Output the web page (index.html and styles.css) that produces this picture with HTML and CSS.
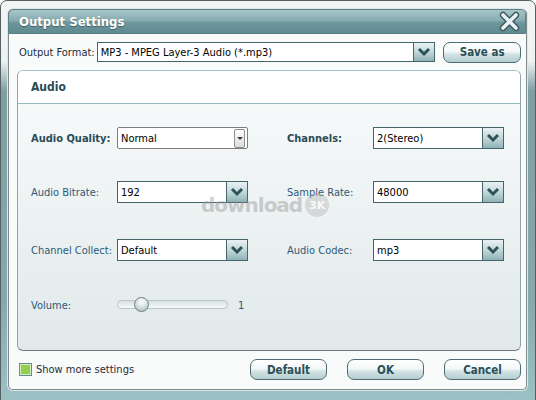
FILE: index.html
```html
<!DOCTYPE html>
<html lang="en">
<head>
    <meta charset="UTF-8">
    <title>Output Settings</title>
    <link rel="stylesheet" href="styles.css">
</head>
<body>

    <div class="window">
        <div class="dialog">
            <div class="titlebar">
                <span class="title">Output Settings</span>
                <svg class="close" width="21" height="21" viewBox="0 0 21 21">
                    <path d="M4 4 L17 17 M17 4 L4 17" stroke="#3b5a5f" stroke-width="6.4" stroke-linecap="round" fill="none"/>
                    <path d="M4 4 L17 17 M17 4 L4 17" stroke="#e9f1f2" stroke-width="3.6" stroke-linecap="round" fill="none"/>
                </svg>
            </div>

            <div class="format-row">
                <span class="format-label">Output Format:</span>
                <div class="combo combo-format">
                    <span class="combo-text">MP3 - MPEG Layer-3 Audio (*.mp3)</span>
                    <span class="combo-arrow"><svg width="14" height="10" viewBox="0 0 14 10"><path d="M2 2 L7 7 L12 2" stroke="#2b5359" stroke-width="3" fill="none"/></svg></span>
                </div>
                <button class="btn btn-save">Save as</button>
            </div>

            <div class="panel">
                <div class="panel-head">Audio</div>
                <div class="panel-body">
                    <div class="row row-1">
                        <span class="label label-bold">Audio Quality:</span>
                        <div class="combo combo-plain">
                            <span class="combo-text">Normal</span>
                            <span class="mini-btn"></span>
                        </div>
                        <span></span>
                        <span class="label label-bold">Channels:</span>
                        <div class="combo">
                            <span class="combo-text">2(Stereo)</span>
                            <span class="combo-arrow"><svg width="14" height="10" viewBox="0 0 14 10"><path d="M2 2 L7 7 L12 2" stroke="#2b5359" stroke-width="3" fill="none"/></svg></span>
                        </div>
                    </div>

                    <div class="row row-2">
                        <span class="label">Audio Bitrate:</span>
                        <div class="combo">
                            <span class="combo-text">192</span>
                            <span class="combo-arrow"><svg width="14" height="10" viewBox="0 0 14 10"><path d="M2 2 L7 7 L12 2" stroke="#2b5359" stroke-width="3" fill="none"/></svg></span>
                        </div>
                        <span></span>
                        <span class="label">Sample Rate:</span>
                        <div class="combo">
                            <span class="combo-text">48000</span>
                            <span class="combo-arrow"><svg width="14" height="10" viewBox="0 0 14 10"><path d="M2 2 L7 7 L12 2" stroke="#2b5359" stroke-width="3" fill="none"/></svg></span>
                        </div>
                    </div>

                    <div class="row row-3">
                        <span class="label">Channel Collect:</span>
                        <div class="combo">
                            <span class="combo-text">Default</span>
                            <span class="combo-arrow"><svg width="14" height="10" viewBox="0 0 14 10"><path d="M2 2 L7 7 L12 2" stroke="#2b5359" stroke-width="3" fill="none"/></svg></span>
                        </div>
                        <span></span>
                        <span class="label">Audio Codec:</span>
                        <div class="combo">
                            <span class="combo-text">mp3</span>
                            <span class="combo-arrow"><svg width="14" height="10" viewBox="0 0 14 10"><path d="M2 2 L7 7 L12 2" stroke="#2b5359" stroke-width="3" fill="none"/></svg></span>
                        </div>
                    </div>

                    <div class="row row-4">
                        <span class="label">Volume:</span>
                        <div class="slider">
                            <div class="slider-track"></div>
                            <div class="slider-thumb"></div>
                        </div>
                        <span class="slider-value">1</span>
                    </div>
                </div>
            </div>

            <div class="footer">
                <span class="check"></span>
                <span class="check-label">Show more settings</span>
                <div class="footer-btns">
                    <button class="btn">Default</button>
                    <button class="btn">OK</button>
                    <button class="btn">Cancel</button>
                </div>
            </div>
        </div>

        <!-- watermark from the screenshot source -->
        <div class="watermark">download<span class="wm-badge">3K</span></div>
    </div>

</body>
</html>
```

FILE: styles.css
```css
body {
    margin: 0;
    padding: 0;
    background-color: #ffffff;
    font-family: "DejaVu Sans Condensed", "DejaVu Sans", sans-serif;
    font-size: 11px;
}

.window {
    position: relative;
    width: 536px;
    height: 408px;
    box-sizing: border-box;
    border: 1px solid #565f61;
    border-radius: 7px 7px 0 0;
    padding: 8px 8px 0 7px;
    background: linear-gradient(to bottom, #f3f5f5 0px, #eef2f2 60px, #7f9ea2 90px, #86a9ad 300px, #9cc2c6 400px);
}

.dialog {
    display: flex;
    flex-direction: column;
    height: 381px;
    box-sizing: border-box;
    border: 1px solid #7d8b8d;
    border-top: none;
    border-radius: 5px;
    background: #f9fbfb;
    padding: 0 5px 0 8px;
    box-shadow: 0 0 0 1px #dfe8e9;
}

.titlebar {
    display: flex;
    align-items: center;
    justify-content: space-between;
    height: 23px;
    margin: 0 -5px 0 -9px;
    padding: 0 5px 0 10px;
    border-radius: 5px 5px 0 0;
    border: 1px solid #5b7f84;
    background: linear-gradient(to bottom, #a9c6c9 0%, #86abb0 45%, #6d979d 55%, #5f8a90 100%);
}

.title {
    color: #ffffff;
    font-weight: bold;
    font-size: 13px;
    text-shadow: 0 1px 1px rgba(0, 0, 0, 0.35);
}

.close {
    display: block;
}

.format-row {
    display: flex;
    align-items: center;
    margin-top: 8px;
    height: 20px;
}

.format-label {
    width: 78px;
    padding-left: 2px;
    color: #1d2a3a;
}

.combo {
    display: flex;
    align-items: center;
    justify-content: space-between;
    width: 131px;
    height: 22px;
    box-sizing: border-box;
    border: 1px solid #44666b;
    background: #ffffff;
}

.combo-text {
    padding-left: 3px;
    color: #000000;
    white-space: nowrap;
}

.combo-arrow {
    display: flex;
    align-items: center;
    justify-content: center;
    width: 20px;
    height: 100%;
    border-left: 1px solid #44666b;
    background: linear-gradient(to bottom, #e9f1f2 0%, #c3d8da 50%, #8fb2b6 100%);
}

.combo-format {
    width: 340px;
    height: 20px;
}

.combo-plain {
    border: 1px solid #7d7d7d;
    border-radius: 2px;
    padding-right: 2px;
}

.mini-btn {
    position: relative;
    width: 9px;
    height: 17px;
    border: 1px solid #8d8d8d;
    border-radius: 2px;
    background: linear-gradient(to bottom, #ffffff, #dcdcdc);
}

.mini-btn::after {
    content: "";
    position: absolute;
    left: 2px;
    top: 7px;
    border-left: 3px solid transparent;
    border-right: 3px solid transparent;
    border-top: 3px solid #3c3c3c;
}

.btn {
    width: 77px;
    height: 21px;
    padding: 0;
    font-family: inherit;
    font-size: 11.5px;
    font-weight: bold;
    color: #2b4f58;
    border: 1px solid #4e6d72;
    border-radius: 7px;
    background: linear-gradient(to bottom, #ffffff 0%, #f3f8f8 45%, #d2e2e4 60%, #b5cdd0 100%);
}

.btn-save {
    margin-left: 8px;
    width: 78px;
}

.panel {
    margin-top: 8px;
    height: 281px;
    box-sizing: border-box;
    border: 1px solid #a3c5c9;
    border-bottom-color: #6e7c7e;
    border-left-color: #8fa6a9;
    border-right-color: #8fa6a9;
    border-radius: 6px;
    background: linear-gradient(to bottom, #f9fbfb 0%, #e1e9ea 100%);
    overflow: hidden;
}

.panel-head {
    height: 32px;
    line-height: 32px;
    padding-left: 13px;
    border-bottom: 1px solid #94b9bd;
    background: #ffffff;
    font-size: 12px;
    font-weight: bold;
    color: #2a4b56;
}

.panel-body {
    padding-left: 13px;
}

.row {
    display: grid;
    grid-template-columns: 86px 131px 39px 86px 131px;
    align-items: center;
    height: 22px;
}

.row-1 { margin-top: 23px; }
.row-2 { margin-top: 32px; }
.row-3 { margin-top: 36px; }
.row-4 { margin-top: 33px; grid-template-columns: 86px 111px 20px; }

.label {
    color: #2c5a78;
    white-space: nowrap;
}

.label-bold {
    font-weight: bold;
    color: #2a4b56;
}

.slider {
    position: relative;
    height: 16px;
}

.slider-track {
    position: absolute;
    left: 0;
    right: 0;
    top: 3px;
    height: 9px;
    box-sizing: border-box;
    border: 1px solid #b9c6c8;
    border-radius: 5px;
    background: linear-gradient(to bottom, #d7e0e1, #f7fafa);
}

.slider-thumb {
    position: absolute;
    left: 17px;
    top: 0;
    width: 15px;
    height: 15px;
    box-sizing: border-box;
    border: 1px solid #6c8185;
    border-radius: 50%;
    background: radial-gradient(circle at 50% 30%, #ffffff 0%, #d6dfe0 50%, #9fb1b4 100%);
}

.slider-value {
    padding-left: 10px;
    color: #2c5a78;
}

.footer {
    display: flex;
    align-items: center;
    margin-top: 8px;
    height: 21px;
}

.check {
    width: 13px;
    height: 13px;
    box-sizing: border-box;
    margin-left: 2px;
    border: 1px solid #5f8f95;
    background: #92cf4f;
    box-shadow: inset 0 0 0 1px #d8ecc6;
}

.check-label {
    margin-left: 4px;
    color: #1d2a3a;
}

.footer-btns {
    display: flex;
    gap: 20px;
    margin-left: auto;
}

.watermark {
    position: absolute;
    left: 200px;
    top: 192px;
    display: flex;
    align-items: center;
    font-family: "DejaVu Sans", sans-serif;
    font-size: 20px;
    font-weight: bold;
    letter-spacing: -1px;
    color: rgba(150, 150, 150, 0.45);
}

.wm-badge {
    display: inline-flex;
    align-items: center;
    justify-content: center;
    width: 24px;
    height: 24px;
    margin-left: 3px;
    border-radius: 50%;
    background: rgba(170, 170, 170, 0.35);
    color: rgba(255, 255, 255, 0.9);
    font-size: 11px;
    letter-spacing: 0;
}
```
